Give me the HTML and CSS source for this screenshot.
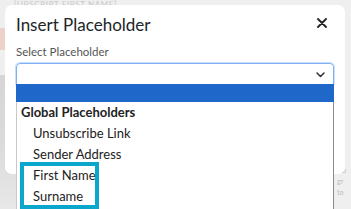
FILE: index.html
```html
<!DOCTYPE html>
<html>
<head>
<meta charset="utf-8">
<link rel="stylesheet" href="styles.css">
</head>
<body>
<div class="page">
  <div class="page-top">[UBSCRIPT FIRST NAME]</div>
  <div class="page-strip"></div>
  <div class="page-photo"></div>
  <div class="page-side">
    <span>ne</span><span>rtu</span><span>gr</span><span>to</span>
  </div>
</div>

<div class="modal">
  <div class="modal-header">
    <h1 class="modal-title">Insert Placeholder</h1>
    <button class="close" aria-label="Close">
      <svg width="10" height="10" viewBox="0 0 10 10"><path d="M1 1L9 9M9 1L1 9" stroke="#222" stroke-width="1.8" stroke-linecap="round"/></svg>
    </button>
  </div>
  <div class="modal-body">
    <label class="label">Select Placeholder</label>
    <div class="select">
      <svg class="chev" width="9" height="6" viewBox="0 0 9 6"><path d="M1 1L4.5 4.5L8 1" stroke="#333" stroke-width="1.5" fill="none" stroke-linecap="round" stroke-linejoin="round"/></svg>
    </div>
  </div>
</div>

<div class="dropdown">
  <div class="opt selected"></div>
  <div class="group">Global Placeholders</div>
  <div class="opt">Unsubscribe Link</div>
  <div class="opt">Sender Address</div>
  <div class="opt">First Name</div>
  <div class="opt">Surname</div>
</div>

<div class="annot"></div>
</body>
</html>
```
FILE: styles.css
```css
html, body {
  margin: 0;
  padding: 0;
  width: 351px;
  height: 209px;
  overflow: hidden;
}
body {
  position: relative;
  background: #ededed;
  font-family: "Lato", "Open Sans", sans-serif;
}
.page {
  position: absolute;
  inset: 0;
  background: #efefef;
}
.page-top {
  position: absolute;
  left: 14px;
  top: 0;
  font-size: 8px;
  line-height: 9px;
  color: #c9c9c9;
  letter-spacing: 0.6px;
}
.page-strip {
  position: absolute;
  left: 0;
  top: 28px;
  width: 8px;
  height: 22px;
  background: #ecd2cb;
}
.page-photo {
  position: absolute;
  left: 0;
  top: 75px;
  width: 18px;
  height: 134px;
  background: linear-gradient(180deg, #d6d6d6 0%, #dadada 50%, #e8e8e8 100%);
}
.page-side {
  position: absolute;
  right: 0;
  top: 155px;
  width: 14px;
  display: flex;
  flex-direction: column;
  gap: 3px;
  font-size: 7px;
  color: #bbb;
}
.modal {
  position: absolute;
  left: 5px;
  top: 5px;
  width: 340px;
  height: 169px;
  background: #fff;
  border-radius: 7px;
  box-sizing: border-box;
  padding: 0 11px;
}
.modal-header {
  display: flex;
  align-items: center;
  justify-content: space-between;
  height: 36px;
}
.modal-title {
  margin: 0;
  font-size: 17px;
  font-weight: 400;
  color: #212529;
  padding-top: 2px;
}
.close {
  border: 0;
  background: transparent;
  padding: 0;
  width: 14px;
  height: 14px;
  display: flex;
  align-items: center;
  justify-content: center;
  margin-right: 5px;
  margin-top: 0;
}
.modal-body {
  padding-top: 4px;
}
.label {
  display: block;
  font-size: 11.5px;
  color: #555;
  line-height: 14px;
  margin-bottom: 4px;
}
.select {
  height: 24px;
  box-sizing: border-box;
  border: 1px solid #7fb0f5;
  border-radius: 4px;
  box-shadow: 0 0 0 1px #c9defb;
  display: flex;
  align-items: center;
  justify-content: flex-end;
  padding-right: 8px;
}
.dropdown {
  position: absolute;
  left: 16px;
  top: 84px;
  width: 318px;
  height: 125px;
  background: #fff;
  border-left: 1px solid #c8c8c8;
  border-right: 1px solid #8a8a8a;
  box-sizing: border-box;
  font-size: 13px;
  color: #222;
}
.opt.selected {
  height: 18px;
  background: #1f67c9;
  margin: 0 -1px;
}
.group {
  font-weight: 700;
  padding-left: 4px;
  line-height: 21px;
}
.opt {
  padding-left: 16px;
  line-height: 21px;
}
.annot {
  position: absolute;
  left: 20px;
  top: 162px;
  width: 79px;
  height: 47px;
  border: 4px solid #0aa6cb;
  box-sizing: border-box;
}
```
